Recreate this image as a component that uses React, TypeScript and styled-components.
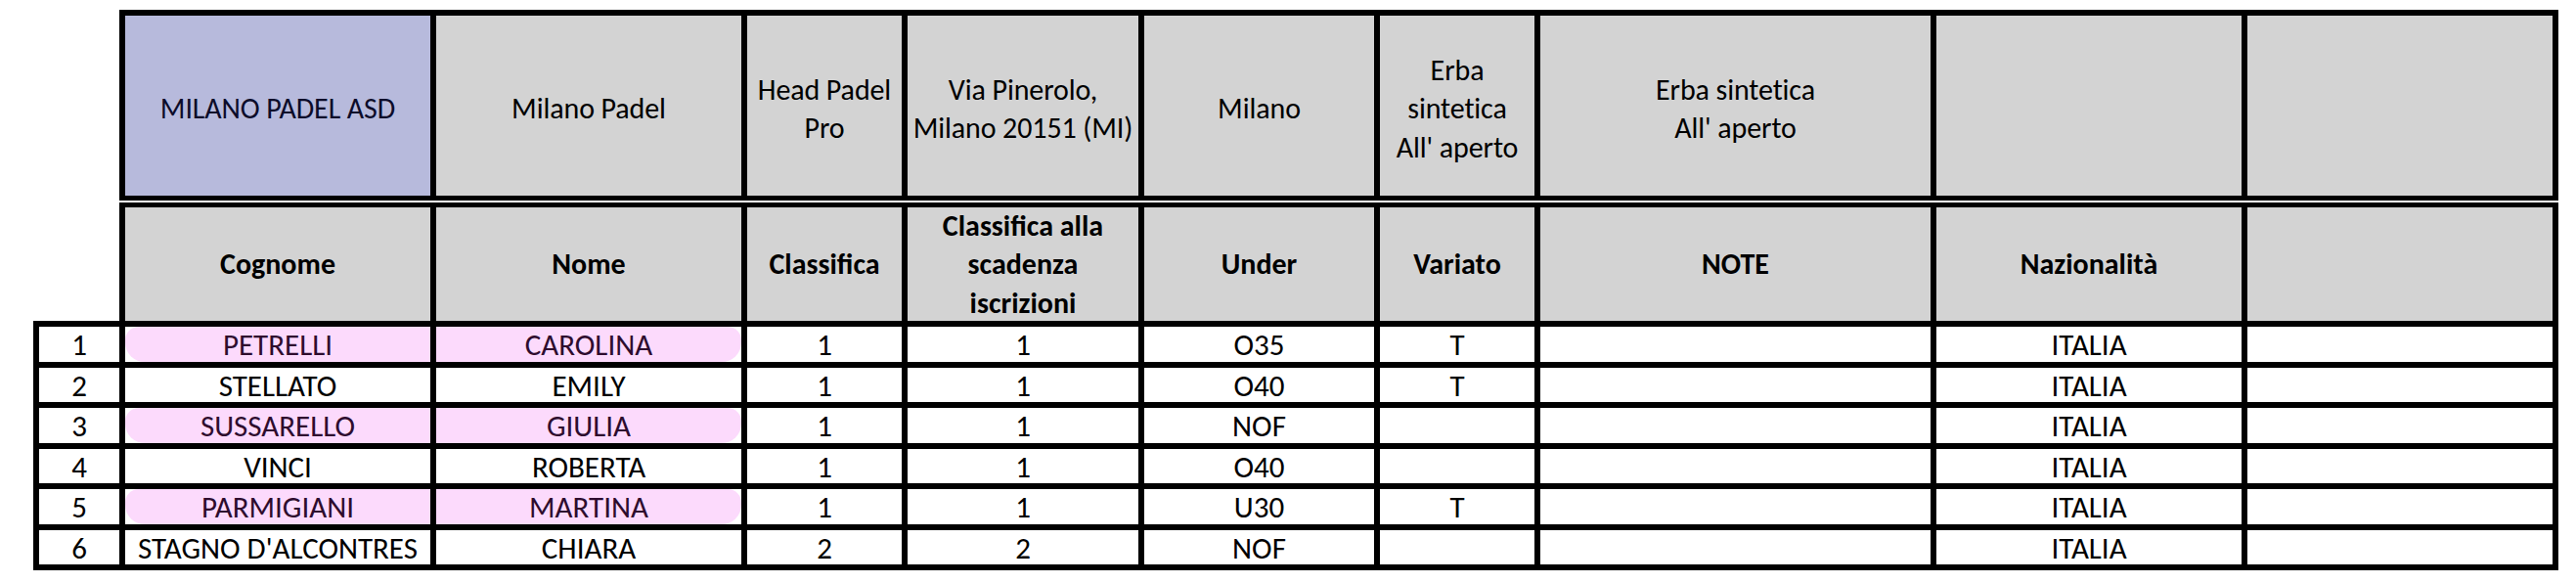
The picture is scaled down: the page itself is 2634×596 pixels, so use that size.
import React from "react";
import styled, { createGlobalStyle } from "styled-components";

const GlobalStyle = createGlobalStyle`
  html, body { margin: 0; padding: 0; background: #ffffff; }
  body {
    font-family: Carlito, Calibri, Lato, "Liberation Sans", sans-serif;
    color: #000000;
  }
`;

const CELL_COLS = "312px 312px 158px 236px 235px 158px 399px 312px 312px";

const Page = styled.div`
  display: flex;
  flex-direction: column;
  align-items: flex-start;
  padding: 10px 0 0 34px;
`;

const HeaderBand = styled.div<{ $top: number; $bottom: number; $gapAbove?: number; $rowH: number }>`
  margin-left: 88px;
  margin-top: ${(p) => p.$gapAbove ?? 0}px;
  display: grid;
  grid-template-columns: ${CELL_COLS};
  grid-auto-rows: ${(p) => p.$rowH}px;
  column-gap: 6px;
  padding: ${(p) => p.$top}px 6px ${(p) => p.$bottom}px 6px;
  background: #000000;
`;

const HeadCell = styled.div<{ $accent?: boolean; $bold?: boolean; $shift?: number }>`
  display: flex;
  align-items: center;
  justify-content: center;
  text-align: center;
  white-space: pre;
  background: ${(p) => (p.$accent ? "#b7badc" : "#d3d3d3")};
  color: ${(p) => (p.$accent ? "#0c0c2a" : "#000000")};
  font-size: 30px;
  font-weight: ${(p) => (p.$bold ? 700 : 400)};
  letter-spacing: ${(p) => (p.$bold ? "0px" : "-0.1px")};
  line-height: 39.5px;
  padding-top: ${(p) => p.$shift ?? 0}px;
  box-sizing: border-box;
  overflow: visible;
`;

const DataGrid = styled.div`
  display: grid;
  grid-template-columns: 82px ${CELL_COLS};
  grid-auto-rows: 35.5px;
  gap: 6px;
  padding: 6px;
  background: #000000;
`;

const DataCell = styled.div`
  display: flex;
  align-items: stretch;
  justify-content: stretch;
  background: #ffffff;
  font-size: 31px;
  line-height: 1;
  white-space: nowrap;
`;

const Mark = styled.div<{ $pink?: boolean; $side?: "left" | "right" }>`
  flex: 1;
  display: flex;
  align-items: center;
  justify-content: center;
  padding-top: 2px;
  background: ${(p) => (p.$pink ? "#fcdafc" : "transparent")};
  color: ${(p) => (p.$pink ? "#2e0c2e" : "#000000")};
  border-radius: ${(p) =>
    !p.$pink ? "0" : p.$side === "left" ? "14px 0 0 20px" : "0 14px 20px 0"};
`;

type Row = {
  n: number;
  cognome: string;
  nome: string;
  cl: string;
  cls: string;
  under: string;
  variato: string;
  pink: boolean;
};

const rows: Row[] = [
  { n: 1, cognome: "PETRELLI", nome: "CAROLINA", cl: "1", cls: "1", under: "O35", variato: "T", pink: true },
  { n: 2, cognome: "STELLATO", nome: "EMILY", cl: "1", cls: "1", under: "O40", variato: "T", pink: false },
  { n: 3, cognome: "SUSSARELLO", nome: "GIULIA", cl: "1", cls: "1", under: "NOF", variato: "", pink: true },
  { n: 4, cognome: "VINCI", nome: "ROBERTA", cl: "1", cls: "1", under: "O40", variato: "", pink: false },
  { n: 5, cognome: "PARMIGIANI", nome: "MARTINA", cl: "1", cls: "1", under: "U30", variato: "T", pink: true },
  { n: 6, cognome: "STAGNO D'ALCONTRES", nome: "CHIARA", cl: "2", cls: "2", under: "NOF", variato: "", pink: false },
];

const clubRow = [
  "MILANO PADEL ASD",
  "Milano Padel",
  "Head Padel\nPro",
  "Via Pinerolo,\nMilano 20151 (MI)",
  "Milano",
  "Erba\nsintetica\nAll' aperto",
  "Erba sintetica\nAll' aperto",
  "",
  "",
];

const titleRow = [
  "Cognome",
  "Nome",
  "Classifica",
  "Classifica alla\nscadenza\niscrizioni",
  "Under",
  "Variato",
  "NOTE",
  "Nazionalità",
  "",
];

export default function App() {
  return (
    <>
      <GlobalStyle />
      <Page>
        <HeaderBand $top={6} $bottom={5} $rowH={184}>
          {clubRow.map((t, i) => (
            <HeadCell key={i} $accent={i === 0} $shift={6}>
              {t}
            </HeadCell>
          ))}
        </HeaderBand>
        <HeaderBand $top={5} $bottom={0} $gapAbove={2} $rowH={116}>
          {titleRow.map((t, i) => (
            <HeadCell key={i} $bold>
              {t}
            </HeadCell>
          ))}
        </HeaderBand>
        <DataGrid>
          {rows.map((r) => (
            <React.Fragment key={r.n}>
              <DataCell><Mark>{r.n}</Mark></DataCell>
              <DataCell><Mark $pink={r.pink} $side="left">{r.cognome}</Mark></DataCell>
              <DataCell><Mark $pink={r.pink} $side="right">{r.nome}</Mark></DataCell>
              <DataCell><Mark>{r.cl}</Mark></DataCell>
              <DataCell><Mark>{r.cls}</Mark></DataCell>
              <DataCell><Mark>{r.under}</Mark></DataCell>
              <DataCell><Mark>{r.variato}</Mark></DataCell>
              <DataCell><Mark /></DataCell>
              <DataCell><Mark>ITALIA</Mark></DataCell>
              <DataCell><Mark /></DataCell>
            </React.Fragment>
          ))}
        </DataGrid>
      </Page>
    </>
  );
}
